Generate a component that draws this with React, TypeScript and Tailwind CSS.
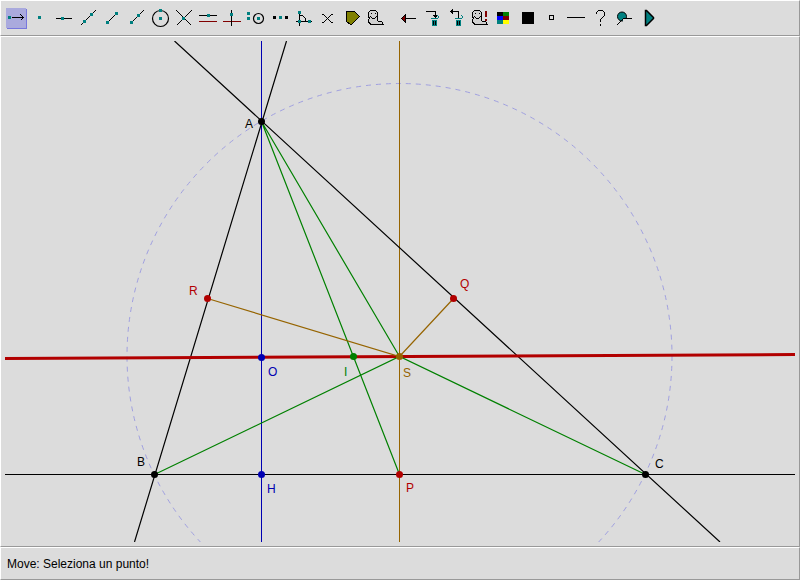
import React from "react";

const TEAL = "#008080";
const MAROON = "#800000";

function Dot({ x, y, fill = TEAL }: { x: number; y: number; fill?: string }) {
  return <rect x={x} y={y} width="3" height="3" fill={fill} stroke="none" />;
}

function Trash() {
  return (
    <g fill={TEAL} stroke="none">
      <path d="M12 14h5v6h-5z" />
      <path d="M11 12h7v1h-7zM18 10h1v2h-1zM17 9h1v1h-1z" />
      <path d="M13 15h1v4h-1zM15 15h1v4h-1z" fill="#000" />
    </g>
  );
}

function Ghost() {
  return (
    <g fill="none">
      <path
        d="M6.5 4.5H11.5L13.5 6.5V14.5L14.5 15.5H17.5L19.5 18.5H7.5L5.5 17.5L4.5 15.5V13.5L5.5 12.5L4.5 10.5V6.5Z"
        fill="#d0d0d0"
      />
      <path d="M7 7.5h1M11 7.5h1M6 10.5h1M7 11.5h1M8 12.5h3M11 11.5h1M12 10.5h1" />
    </g>
  );
}

const tools: { name: string; art: React.ReactNode }[] = [
  {
    name: "Move",
    art: (
      <>
        <rect x="3" y="3" width="20" height="20" fill="#7777dd" stroke="none" />
        <rect x="2" y="2" width="20" height="20" fill="#aaaadd" stroke="none" />
        <Dot x={4} y={10} />
        <path d="M8 11.5H20M16.5 8.5L19.5 11.5L16.5 14.5" />
      </>
    ),
  },
  { name: "Point", art: <Dot x={10} y={10} /> },
  {
    name: "Point on line",
    art: (
      <>
        <path d="M4 12.5H20" />
        <Dot x={9} y={11} />
      </>
    ),
  },
  {
    name: "Line",
    art: (
      <>
        <path d="M4.5 19.5L19.5 4.5" />
        <Dot x={7} y={14} />
        <Dot x={14} y={7} />
      </>
    ),
  },
  {
    name: "Segment",
    art: (
      <>
        <path d="M7.5 16.5L16.5 7.5" />
        <Dot x={6} y={15} />
        <Dot x={15} y={6} />
      </>
    ),
  },
  {
    name: "Ray",
    art: (
      <>
        <path d="M7.5 16.5L19.5 4.5" />
        <Dot x={6} y={15} />
        <Dot x={13} y={8} />
      </>
    ),
  },
  {
    name: "Circle",
    art: (
      <>
        <circle cx="12.5" cy="12.5" r="8" shapeRendering="geometricPrecision" strokeWidth="1.2" />
        <Dot x={11} y={3} />
        <Dot x={11} y={11} />
      </>
    ),
  },
  {
    name: "Intersection",
    art: (
      <>
        <path d="M4.5 4.5L19.5 19.5M4.5 19.5L19.5 4.5" />
        <Dot x={10} y={11} />
      </>
    ),
  },
  {
    name: "Parallel",
    art: (
      <>
        <path d="M3 9.5H21" />
        <path d="M3 15.5H21" stroke={MAROON} />
        <Dot x={11} y={8} />
      </>
    ),
  },
  {
    name: "Perpendicular",
    art: (
      <>
        <path d="M3 15.5H21" stroke={MAROON} />
        <path d="M11.5 4V20" />
        <Dot x={10} y={7} />
      </>
    ),
  },
  {
    name: "Compass",
    art: (
      <>
        <Dot x={3} y={6} />
        <Dot x={3} y={11} />
        <circle cx="14.5" cy="12.5" r="5" shapeRendering="geometricPrecision" strokeWidth="1.2" />
        <Dot x={13} y={11} />
      </>
    ),
  },
  {
    name: "Midpoint",
    art: (
      <>
        <Dot x={5} y={10} fill="#000" />
        <Dot x={11} y={10} />
        <Dot x={17} y={10} fill="#000" />
      </>
    ),
  },
  {
    name: "Angle",
    art: (
      <>
        <path d="M7.5 5V20M4 15.5H20M8 9.5H10.5L13.5 12.5V15" />
        <Dot x={6} y={5} />
        <Dot x={6} y={14} />
        <Dot x={16} y={14} />
      </>
    ),
  },
  {
    name: "Fixed angle",
    art: <path d="M6 8.5H7.5L15.5 16.5H17M17 8.5H15.5L7.5 16.5H6" />,
  },
  {
    name: "Polygon",
    art: <path d="M6.5 5.5H14.5L19.5 10.5L11.5 18.5H10.5L6.5 15.5Z" fill="#808000" />,
  },
  { name: "Hide", art: <Ghost /> },
  {
    name: "Back",
    art: (
      <>
        <path d="M5.5 12.5L9.5 8.5V16.5Z" fill={MAROON} />
        <path d="M10 12.5H20" />
      </>
    ),
  },
  {
    name: "Delete",
    art: (
      <>
        <path d="M6 5.5H15.5V10" />
        <path d="M13 9h5v1h-1v1h-1v1h-1v-1h-1v-1h-1z" fill="#000" stroke="none" />
        <Trash />
      </>
    ),
  },
  {
    name: "Undelete",
    art: (
      <>
        <path d="M8 5.5H14.5V12" />
        <path d="M6 5h1v-1h1v-1h1v5h-1v-1h-1v-1h-1z" fill="#000" stroke="none" />
        <Trash />
      </>
    ),
  },
  {
    name: "Show hidden",
    art: (
      <>
        <Ghost />
        <path d="M17 5h2v6h-2zM17 13h2v2h-2z" fill={MAROON} stroke="none" />
      </>
    ),
  },
  {
    name: "Colour",
    art: (
      <g stroke="none">
        <path d="M5 6h6v4h-6z" fill="#000" />
        <path d="M11 6h6v4h-6z" fill="#008000" />
        <path d="M5 10h6v4h-6z" fill="#0000ff" />
        <path d="M11 10h6v4h-6z" fill={MAROON} />
        <path d="M5 14h6v4h-6z" fill={TEAL} />
        <path d="M11 14h6v4h-6z" fill="#ffff00" />
      </g>
    ),
  },
  { name: "Fill", art: <path d="M6 6h12v12h-12z" fill="#000" stroke="none" /> },
  { name: "Point style", art: <path d="M9.5 9.5h4v4h-4z" /> },
  { name: "Line thickness", art: <path d="M3 11.5H21" /> },
  {
    name: "Help",
    art: <path d="M8.5 8V6.5L10.5 4.5H14.5L16.5 6.5V9.5L12.5 13.5V16M12.5 18V20" />,
  },
  {
    name: "Macro",
    art: (
      <>
        <circle cx="10" cy="10.5" r="4.5" fill={TEAL} shapeRendering="geometricPrecision" />
        <path d="M11 13h6v4h-6z" fill="#dcdcdc" stroke="none" />
        <path d="M4.5 19.5L11.5 12.5H20" />
      </>
    ),
  },
  {
    name: "Replay",
    art: <path d="M9.5 4.5V19.5H10.5L17.5 12.5V11.5L10.5 4.5Z" fill={TEAL} strokeWidth="1.5" shapeRendering="geometricPrecision" />,
  },
];

function ToolButton({ name, art }: { name: string; art: React.ReactNode }) {
  return (
    <button type="button" aria-label={name} className="size-6 shrink-0">
      <svg
        viewBox="0 0 24 24"
        className="block size-6"
        fill="none"
        stroke="#000"
        shapeRendering="crispEdges"
        aria-hidden="true"
      >
        {art}
      </svg>
    </button>
  );
}

const BLACK = "#000000";
const RED = "#b20000";
const BLUE = "#0000b2";
const GREEN = "#008000";
const BROWN = "#966400";

const points = [
  { label: "A", x: 261.5, y: 121.5, lx: 245, ly: 128, color: BLACK },
  { label: "B", x: 154.5, y: 474.5, lx: 137, ly: 466, color: BLACK },
  { label: "C", x: 645.5, y: 474.5, lx: 655, ly: 468, color: BLACK },
  { label: "H", x: 261.5, y: 474.5, lx: 267, ly: 493, color: BLUE },
  { label: "O", x: 261.5, y: 357.5, lx: 268, ly: 376, color: BLUE },
  { label: "P", x: 399.5, y: 474.5, lx: 406, ly: 492, color: RED },
  { label: "Q", x: 453.5, y: 298.5, lx: 460, ly: 288, color: RED },
  { label: "R", x: 207.5, y: 298.5, lx: 189, ly: 295, color: RED },
  { label: "I", x: 353.5, y: 356.5, lx: 344, ly: 376, color: GREEN },
  { label: "S", x: 399.5, y: 356.5, lx: 403, ly: 377, color: BROWN },
];

function Construction() {
  return (
    <svg viewBox="5 41 790 501" className="block h-full w-full" fill="none" role="img" aria-label="Triangle ABC">
      <circle cx="399.5" cy="356" r="272.5" stroke="#a0a0e0" strokeDasharray="5 5" />
      <path d="M261.5 41V542" stroke={BLUE} />
      <path d="M399.5 41V542" stroke={BROWN} />
      <path d="M5 474.5H795" stroke={BLACK} />
      <path d="M134.5 542L286.5 41M174.5 41L720 542" stroke={BLACK} strokeWidth="1.2" />
      <path d="M5 358.5L795 354.5" stroke={RED} strokeWidth="3" />
      <path d="M399.5 474.5L261.5 121.5L399.5 356.5M154.5 474.5L399.5 356.5L645.5 474.5" stroke={GREEN} strokeWidth="1.2" />
      <path d="M207.5 298.5L399.5 356.5L453.5 298.5" stroke={BROWN} strokeWidth="1.2" />
      {points.map((p) => (
        <g key={p.label} fill={p.color}>
          <circle cx={p.x} cy={p.y} r="3.5" />
          <text x={p.lx} y={p.ly} className="text-[12px]">
            {p.label}
          </text>
        </g>
      ))}
    </svg>
  );
}

const panel = "border border-t-white border-l-white border-r-[#999999] border-b-[#999999]";

export default function App() {
  return (
    <div className="flex h-screen flex-col bg-[#dcdcdc] font-['Liberation_Sans',Arial,sans-serif] text-[12px] text-black">
      <header className={`flex h-9 shrink-0 items-center gap-2 px-[3px] ${panel}`}>
        <div className="flex">
          {tools.slice(0, 16).map((t) => (
            <ToolButton key={t.name} {...t} />
          ))}
        </div>
        <div className="flex">
          {tools.slice(16).map((t) => (
            <ToolButton key={t.name} {...t} />
          ))}
        </div>
      </header>
      <main className={`min-h-0 flex-1 p-1 ${panel}`}>
        <Construction />
      </main>
      <footer className={`flex h-[33px] shrink-0 items-center px-1.5 ${panel}`}>
        <p>Move: Seleziona un punto!</p>
      </footer>
    </div>
  );
}
